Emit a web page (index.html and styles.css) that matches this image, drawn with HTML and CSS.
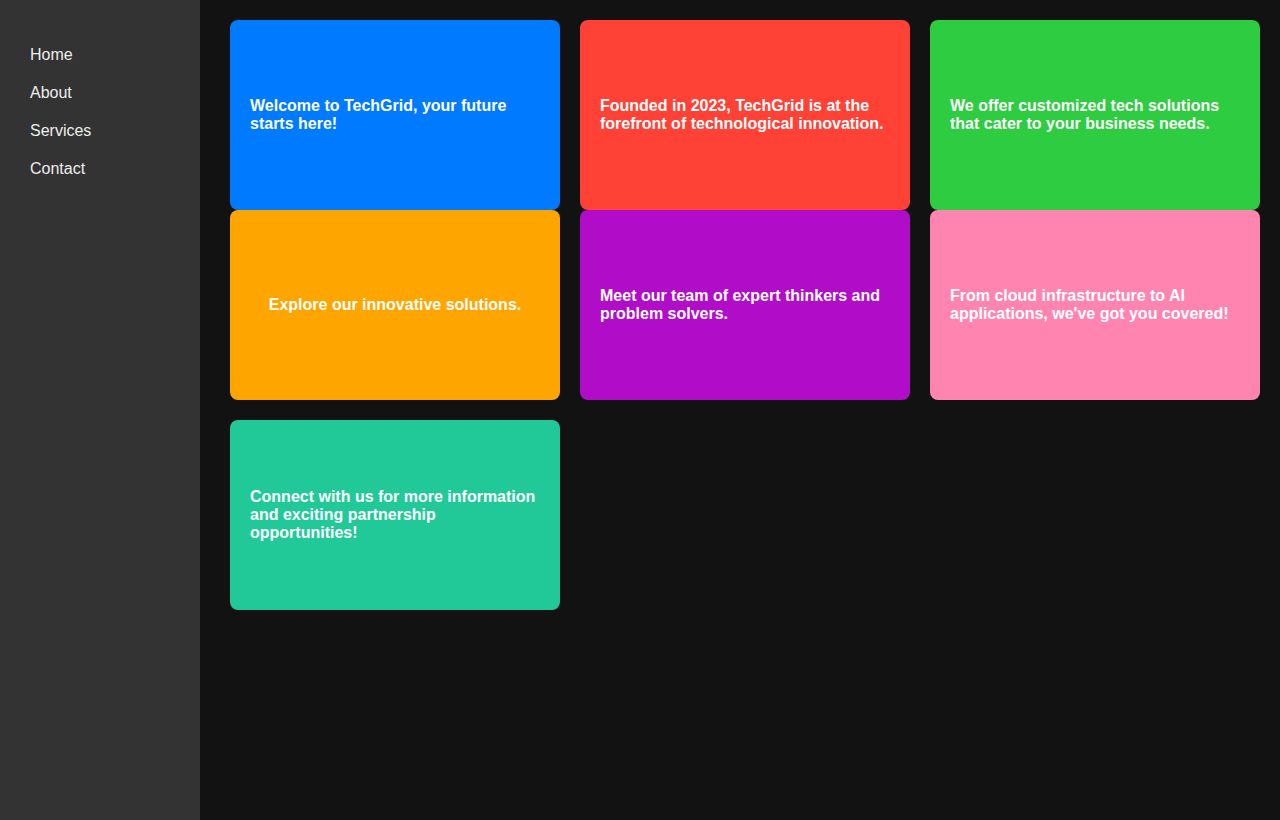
FILE: index.html
```html
<!DOCTYPE html>
<html lang="en">
<head>
<meta charset="utf-8">
<title>TechGrid</title>
<link rel="stylesheet" href="styles.css">
</head>
<body>
<div class="layout">
  <aside class="sidebar">
    <nav>
      <a class="nav-link" href="#">Home</a>
      <a class="nav-link" href="#">About</a>
      <a class="nav-link" href="#">Services</a>
      <a class="nav-link" href="#">Contact</a>
    </nav>
  </aside>
  <main class="main">
    <div class="grid">
      <div class="card blue"><p>Welcome to TechGrid, your future starts here!</p></div>
      <div class="card red"><p>Founded in 2023, TechGrid is at the forefront of technological innovation.</p></div>
      <div class="card green"><p>We offer customized tech solutions that cater to your business needs.</p></div>
      <div class="card orange center"><p>Explore our innovative solutions.</p></div>
      <div class="card purple"><p>Meet our team of expert thinkers and problem solvers.</p></div>
      <div class="card pink"><p>From cloud infrastructure to AI applications, we've got you covered!</p></div>
    </div>
    <div class="grid grid-second">
      <div class="card teal"><p>Connect with us for more information and exciting partnership opportunities!</p></div>
    </div>
  </main>
</div>
</body>
</html>
```
FILE: styles.css
```css
* { box-sizing: border-box; }
html, body {
  margin: 0;
  height: 100%;
  background: #121212;
  font-family: "Liberation Sans", Arial, sans-serif;
}
.layout {
  display: flex;
  min-height: 100vh;
}
.sidebar {
  width: 200px;
  flex: 0 0 200px;
  background: #333333;
  padding: 36px 30px;
}
.sidebar nav {
  display: flex;
  flex-direction: column;
}
.nav-link {
  color: #eeeeee;
  text-decoration: none;
  font-size: 16px;
  line-height: normal;
  padding: 10px 0;
}
.main {
  flex: 1;
  padding: 20px 20px 20px 30px;
}
.grid {
  display: grid;
  grid-template-columns: repeat(3, 330px);
  grid-auto-rows: 190px;
  column-gap: 20px;
}
.grid-second {
  margin-top: 20px;
}
.card {
  border-radius: 8px;
  padding: 20px;
  display: flex;
  align-items: center;
  color: #ffffff;
}
.card p {
  margin: 0;
  font-size: 16px;
  font-weight: bold;
  line-height: normal;
}
.card.center {
  justify-content: center;
  text-align: center;
}
.blue { background: #007bff; }
.red { background: #ff4136; }
.green { background: #2ecc40; }
.orange { background: #ffa500; }
.purple { background: #b10dc9; }
.pink { background: #ff85b0; }
.teal { background: #20c997; }
```
